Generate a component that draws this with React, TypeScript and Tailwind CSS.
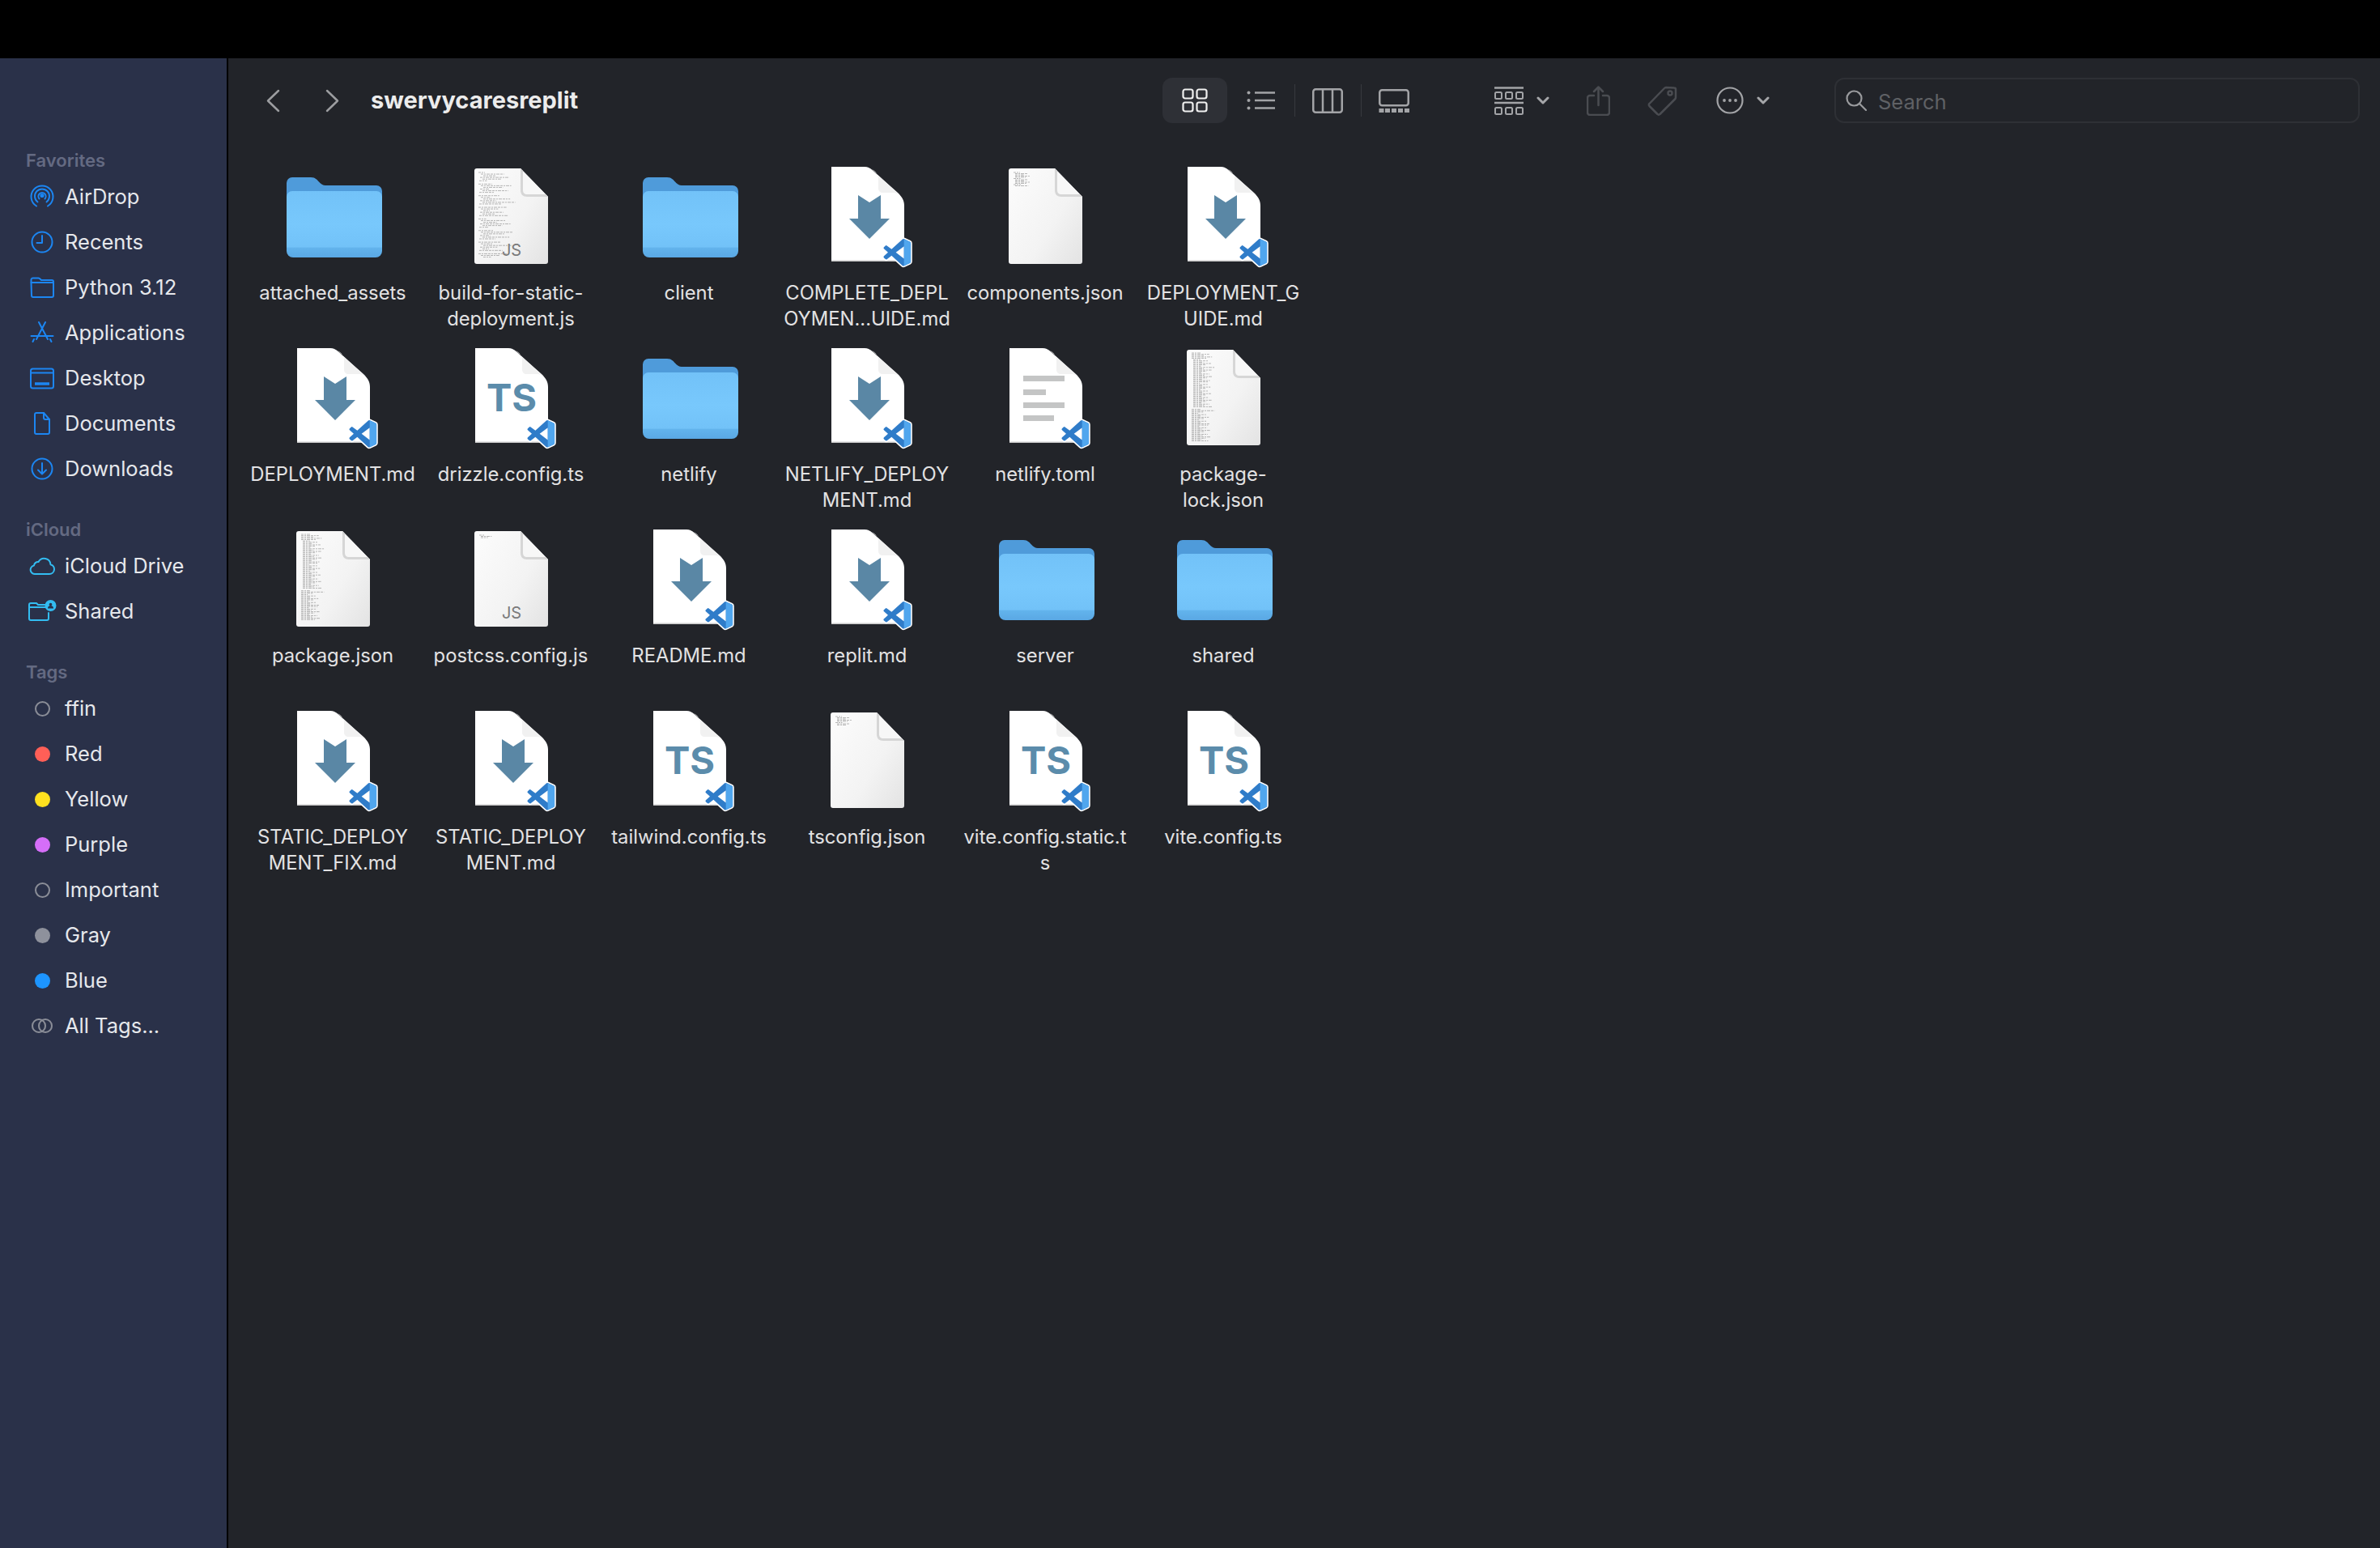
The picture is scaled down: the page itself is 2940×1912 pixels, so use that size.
import type { ReactNode } from "react";

type Kind = "folder" | "md" | "ts" | "toml" | "code";

type FileItem = {
  lines: string[];
  kind: Kind;
  density?: "page" | "few" | "tiny" | "long" | "long2" | "small";
  js?: boolean;
};

const FILES: FileItem[] = [
  { lines: ["attached_assets"], kind: "folder" },
  { lines: ["build-for-static-", "deployment.js"], kind: "code", density: "page", js: true },
  { lines: ["client"], kind: "folder" },
  { lines: ["COMPLETE_DEPL", "OYMEN...UIDE.md"], kind: "md" },
  { lines: ["components.json"], kind: "code", density: "few" },
  { lines: ["DEPLOYMENT_G", "UIDE.md"], kind: "md" },
  { lines: ["DEPLOYMENT.md"], kind: "md" },
  { lines: ["drizzle.config.ts"], kind: "ts" },
  { lines: ["netlify"], kind: "folder" },
  { lines: ["NETLIFY_DEPLOY", "MENT.md"], kind: "md" },
  { lines: ["netlify.toml"], kind: "toml" },
  { lines: ["package-", "lock.json"], kind: "code", density: "long" },
  { lines: ["package.json"], kind: "code", density: "long2" },
  { lines: ["postcss.config.js"], kind: "code", density: "tiny", js: true },
  { lines: ["README.md"], kind: "md" },
  { lines: ["replit.md"], kind: "md" },
  { lines: ["server"], kind: "folder" },
  { lines: ["shared"], kind: "folder" },
  { lines: ["STATIC_DEPLOY", "MENT_FIX.md"], kind: "md" },
  { lines: ["STATIC_DEPLOY", "MENT.md"], kind: "md" },
  { lines: ["tailwind.config.ts"], kind: "ts" },
  { lines: ["tsconfig.json"], kind: "code", density: "small" },
  { lines: ["vite.config.static.t", "s"], kind: "ts" },
  { lines: ["vite.config.ts"], kind: "ts" },
];

const BLUE = "#1c86f2";
const CYAN = "#33bdf2";

function Ico({ children, w = 32, h = 32, stroke = BLUE }: { children: ReactNode; w?: number; h?: number; stroke?: string }) {
  return (
    <svg width={w} height={h} viewBox={`0 0 ${w} ${h}`} fill="none" stroke={stroke} strokeWidth="2" strokeLinecap="round" strokeLinejoin="round">
      {children}
    </svg>
  );
}

const AirDropIcon = () => (
  <Ico>
    <path d="M9 27.500A13.500 13.500 0 1 1 23 27.500" />
    <path d="M10.500 22.500A9 9 0 1 1 21.500 22.500" />
    <path d="M12.500 18.500A4.600 4.600 0 1 1 19.500 18.500" />
    <circle cx="16" cy="14.500" r="1.600" fill={BLUE} />
  </Ico>
);
const RecentsIcon = () => (
  <Ico>
    <circle cx="16" cy="16" r="12.500" />
    <path d="M16 8v9H9.500" />
  </Ico>
);
const FolderIcon = () => (
  <Ico>
    <path d="M2.500 10V6.500a2 2 0 0 1 2-2h7a3 3 0 0 1 2 1l1.500 1.500h13a2 2 0 0 1 2 2V26a2 2 0 0 1-2 2h-23a2 2 0 0 1-2-2z" />
    <path d="M2.500 10h27" />
  </Ico>
);
const AppsIcon = () => (
  <Ico>
    <path d="M12 3l11 21" />
    <path d="M20 3L9 24" />
    <path d="M2.500 20h27" />
    <path d="M6 24l-1.500 3M26 24l1.500 3" />
  </Ico>
);
const DesktopIcon = () => (
  <Ico>
    <rect x="2" y="4.500" width="28" height="24" rx="2.500" />
    <path d="M2 9.500h28" />
    <path d="M7 23h18" strokeWidth="3.500" strokeLinecap="butt" />
  </Ico>
);
const DocIcon = () => (
  <Ico>
    <path d="M7 5a2 2 0 0 1 2-2h9l7 8v16a2 2 0 0 1-2 2H9a2 2 0 0 1-2-2z" />
    <path d="M18 3v6a2 2 0 0 0 2 2h5" />
  </Ico>
);
const DownloadsIcon = () => (
  <Ico>
    <circle cx="16" cy="16" r="12.500" />
    <path d="M16 9v13M11 17.500l5 5 5-5" />
  </Ico>
);
const CloudIcon = () => (
  <Ico stroke={CYAN}>
    <path d="M8 26h17a6 6 0 0 0 1.500-11.800A8 8 0 0 0 11.500 11 5 5 0 0 0 6 15.500 5.300 5.300 0 0 0 8 26z" />
  </Ico>
);
const SharedIcon = () => (
  <Ico w={36} stroke={CYAN}>
    <path d="M2 10V8a2 2 0 0 1 2-2h7l2 2h10M2 11h20M2 10v15a2 2 0 0 0 2 2h20a2 2 0 0 0 2-2v-7" />
    <circle cx="28.500" cy="9" r="6" fill={CYAN} />
    <circle cx="28.500" cy="7.500" r="1.800" fill="#2a3149" stroke="none" />
    <path d="M25 12.500a3.500 3.500 0 0 1 7 0z" fill="#2a3149" stroke="none" />
  </Ico>
);

const Dot = ({ color }: { color: string }) => <span className="h-[19px] w-[19px] rounded-full" style={{ backgroundColor: color }} />;
const Ring = () => <span className="h-[19px] w-[19px] rounded-full border-[2px] border-[#8a8d97]" />;
const AllTags = () => (
  <svg width="28" height="20" viewBox="0 0 28 20" fill="none" stroke="#8a8d97" strokeWidth="2">
    <circle cx="18" cy="10" r="8" />
    <circle cx="10" cy="10" r="8" />
  </svg>
);

function SideRow({ icon, label }: { icon: ReactNode; label: string }) {
  return (
    <div className="flex h-14 items-center pl-8">
      <span className="flex w-10 items-center justify-center">{icon}</span>
      <span className="ml-2 text-[25.500px] leading-none text-[#e6e8ec]">{label}</span>
    </div>
  );
}

function SideHead({ children }: { children: ReactNode }) {
  return <div className="flex h-[34px] items-center pl-8 text-[22px] font-semibold text-[#646a82]">{children}</div>;
}

function Sidebar() {
  return (
    <aside className="w-[282px] shrink-0 border-r-[2px] border-black bg-[#2a3149] pt-[109px]">
      <SideHead>Favorites</SideHead>
      <SideRow icon={<AirDropIcon />} label="AirDrop" />
      <SideRow icon={<RecentsIcon />} label="Recents" />
      <SideRow icon={<FolderIcon />} label="Python 3.12" />
      <SideRow icon={<AppsIcon />} label="Applications" />
      <SideRow icon={<DesktopIcon />} label="Desktop" />
      <SideRow icon={<DocIcon />} label="Documents" />
      <SideRow icon={<DownloadsIcon />} label="Downloads" />
      <div className="mt-[30px]">
        <SideHead>iCloud</SideHead>
        <SideRow icon={<CloudIcon />} label="iCloud Drive" />
        <SideRow icon={<SharedIcon />} label="Shared" />
      </div>
      <div className="mt-[30px]">
        <SideHead>Tags</SideHead>
        <SideRow icon={<Ring />} label="ffin" />
        <SideRow icon={<Dot color="#ff5f57" />} label="Red" />
        <SideRow icon={<Dot color="#ffe11f" />} label="Yellow" />
        <SideRow icon={<Dot color="#d56ef8" />} label="Purple" />
        <SideRow icon={<Ring />} label="Important" />
        <SideRow icon={<Dot color="#8e919c" />} label="Gray" />
        <SideRow icon={<Dot color="#1d95ff" />} label="Blue" />
        <SideRow icon={<AllTags />} label="All Tags..." />
      </div>
    </aside>
  );
}

function MiniChevron() {
  return (
    <svg width="16" height="10" viewBox="0 0 16 10" fill="none" stroke="#a5a6a9" strokeWidth="3" strokeLinecap="round" strokeLinejoin="round" className="ml-4">
      <path d="M2 2l6 6 6-6" />
    </svg>
  );
}

function Toolbar() {
  const bright = "#f0f0f0";
  const mid = "#a3a4a7";
  const dim = "#4a4c51";
  return (
    <div className="flex h-[104px] items-center">
      <div className="flex w-[1154px] shrink-0 items-center">
        <svg width="17" height="29" viewBox="0 0 17 29" fill="none" stroke="#9c9da0" strokeWidth="2.500" strokeLinecap="round" strokeLinejoin="round" className="ml-[47px]">
          <path d="M15 2L2 14.500 15 27" />
        </svg>
        <svg width="17" height="29" viewBox="0 0 17 29" fill="none" stroke="#9c9da0" strokeWidth="2.500" strokeLinecap="round" strokeLinejoin="round" className="ml-14">
          <path d="M2 2l13 12.500L2 27" />
        </svg>
        <span className="mb-0.5 ml-[39px] text-[29px] leading-none font-bold text-[#ececec]">swervycaresreplit</span>
      </div>

      <div className="flex h-14 w-20 items-center justify-center rounded-xl bg-[#2e3036]">
        <svg width="32" height="30" viewBox="0 0 32 30" fill="none" stroke={bright} strokeWidth="2.200">
          <rect x="1.500" y="1.500" width="12" height="11" rx="2.500" />
          <rect x="18.500" y="1.500" width="12" height="11" rx="2.500" />
          <rect x="1.500" y="17.500" width="12" height="11" rx="2.500" />
          <rect x="18.500" y="17.500" width="12" height="11" rx="2.500" />
        </svg>
      </div>
      <svg width="35" height="24" viewBox="0 0 35 24" fill="none" stroke={mid} strokeWidth="2.500" className="ml-6">
        <path d="M10 2.500h25M10 12h25M10 21.500h25" />
        <circle cx="2.500" cy="2.500" r="2" fill={mid} stroke="none" />
        <circle cx="2.500" cy="12" r="2" fill={mid} stroke="none" />
        <circle cx="2.500" cy="21.500" r="2" fill={mid} stroke="none" />
      </svg>
      <span className="ml-6 h-10 w-px bg-[#37393e]" />
      <svg width="38" height="31" viewBox="0 0 38 31" fill="none" stroke={mid} strokeWidth="2.500" className="ml-[21px]">
        <rect x="1.250" y="1.250" width="35.500" height="28.500" rx="3" />
        <path d="M13 1v29M25 1v29" />
      </svg>
      <span className="ml-[22px] h-10 w-px bg-[#37393e]" />
      <svg width="38" height="29" viewBox="0 0 38 29" fill="none" stroke={mid} strokeWidth="2.500" className="ml-[21px]">
        <rect x="1.250" y="1.250" width="35.500" height="19" rx="3" />
        <g fill={mid} stroke="none">
          <rect x="0.500" y="24" width="6" height="5" />
          <rect x="8" y="24" width="6" height="5" />
          <rect x="16" y="24" width="6" height="5" />
          <rect x="24" y="24" width="6" height="5" />
          <rect x="32" y="24" width="6" height="5" />
        </g>
      </svg>
      <svg width="36" height="35" viewBox="0 0 36 35" fill="none" stroke={mid} strokeWidth="2" className="ml-[105px]">
        <path d="M0 1.500h36M0 20h36" strokeWidth="2.500" />
        <rect x="1" y="7" width="8" height="8" rx="1.500" />
        <rect x="14" y="7" width="8" height="8" rx="1.500" />
        <rect x="27" y="7" width="8" height="8" rx="1.500" />
        <rect x="1" y="26" width="8" height="8" rx="1.500" />
        <rect x="14" y="26" width="8" height="8" rx="1.500" />
        <rect x="27" y="26" width="8" height="8" rx="1.500" />
      </svg>
      <MiniChevron />
      <svg width="29" height="37" viewBox="0 0 29 37" fill="none" stroke={dim} strokeWidth="2.500" strokeLinecap="round" strokeLinejoin="round" className="ml-[46px]">
        <path d="M9 12H4a3 3 0 0 0-3 3v18a3 3 0 0 0 3 3h21a3 3 0 0 0 3-3V15a3 3 0 0 0-3-3h-5" />
        <path d="M14.500 24V2M9 7l5.500-5.500L20 7" />
      </svg>
      <svg width="37" height="37" viewBox="0 0 37 37" fill="none" stroke={dim} strokeWidth="2.500" strokeLinejoin="round" className="ml-[46px]">
        <path d="M2.500 22L21 3a3 3 0 0 1 2-1l10 .5a2 2 0 0 1 2 2L35 14a3 3 0 0 1-1 2.500L15.500 35a2 2 0 0 1-3 0l-10-10a2 2 0 0 1 0-3z" />
        <circle cx="28" cy="9" r="2.500" />
      </svg>
      <svg width="34" height="34" viewBox="0 0 34 34" fill="none" stroke={mid} strokeWidth="2.200" className="ml-12">
        <circle cx="17" cy="17" r="15.500" />
        <circle cx="10" cy="17" r="1.900" fill={mid} stroke="none" />
        <circle cx="17" cy="17" r="1.900" fill={mid} stroke="none" />
        <circle cx="24" cy="17" r="1.900" fill={mid} stroke="none" />
      </svg>
      <MiniChevron />

      <div className="ml-20 flex h-14 w-[649px] items-center rounded-xl border-2 border-[#2e3035] pl-3">
        <svg width="26" height="26" viewBox="0 0 26 26" fill="none" stroke="#9a9b9e" strokeWidth="2.200" strokeLinecap="round">
          <circle cx="10.500" cy="10.500" r="9" />
          <path d="M17 17l8 8" />
        </svg>
        <span className="ml-[14px] mt-1 text-[25.500px] leading-none text-[#5f6165]">Search</span>
      </div>
    </div>
  );
}

function FolderArt() {
  return (
    <svg width="128" height="128" viewBox="0 0 128 128" className="overflow-visible">
      <defs>
        <linearGradient id="ffront" x1="0" y1="0" x2="0" y2="1">
          <stop offset="0" stopColor="#72c2f8" />
          <stop offset="0.5" stopColor="#78c8fc" />
          <stop offset="0.84" stopColor="#72c2f8" />
          <stop offset="0.86" stopColor="#62b3ec" />
          <stop offset="1" stopColor="#5aa8e4" />
        </linearGradient>
      </defs>
      <path d="M7 26a7 7 0 0 1 7-7h23c3 0 5 .8 7 2.500 3 2.500 5 7 11 7.500h63a7 7 0 0 1 7 7v20H7z" fill="#4f9bda" />
      <path d="M7 43a7 7 0 0 1 7-7h104a7 7 0 0 1 7 7v67a8 8 0 0 1-8 8H15a8 8 0 0 1-8-8z" fill="url(#ffront)" />
    </svg>
  );
}

function VsBadge() {
  return (
    <g transform="translate(84.500 95) scale(1.400)">
      <path
        d="M23.150 2.587L18.210.21a1.494 1.494 0 0 0-1.705.29l-9.460 8.630-4.120-3.128a.999.999 0 0 0-1.276.057L.327 7.261A1 1 0 0 0 .326 8.740L3.899 12 .326 15.260a1 1 0 0 0 .001 1.479L1.650 17.940a.999.999 0 0 0 1.276.057l4.120-3.128 9.460 8.630a1.492 1.492 0 0 0 1.704.290l4.942-2.377A1.500 1.500 0 0 0 24 20.060V3.939a1.500 1.500 0 0 0-.850-1.352z"
        fill="#fff"
        stroke="#fff"
        strokeWidth="2.400"
        strokeLinejoin="round"
      />
      <path
        d="M23.150 2.587L18.210.21a1.494 1.494 0 0 0-1.705.29l-9.460 8.630-4.120-3.128a.999.999 0 0 0-1.276.057L.327 7.261A1 1 0 0 0 .326 8.740L3.899 12 .326 15.260a1 1 0 0 0 .001 1.479L1.650 17.940a.999.999 0 0 0 1.276.057l4.120-3.128 9.460 8.630a1.492 1.492 0 0 0 1.704.290l4.942-2.377A1.500 1.500 0 0 0 24 20.060V3.939a1.500 1.500 0 0 0-.850-1.352zm-5.146 14.861L10.826 12l7.178-5.448v10.896z"
        fill="#2f7cc9"
        fillRule="evenodd"
      />
      <path d="M18.004.1l5.146 2.487A1.500 1.500 0 0 1 24 3.939V20.060a1.500 1.500 0 0 1-.850 1.352L18.004 23.900V.1z" fill="#50a6ee" />
    </g>
  );
}

function VsDoc({ children }: { children: ReactNode }) {
  return (
    <svg width="128" height="128" viewBox="0 0 128 128" className="overflow-visible">
      <path d="M20 6h41c4 0 7 1.500 10 4.500L102 38c5 5 8 9 8 16v69H20z" fill="#fff" />
      <path d="M20 121.500h90v1.500H20z" fill="#c9c9c9" />
      <path d="M64 6.500c3 .5 5.500 2 7.500 4L104 41c-3-2.500-6-3-9-3H84c-4 0-6-2-6-6V20c0-5-5-11-14-13.500z" fill="#f1f1f1" />
      {children}
      <VsBadge />
    </svg>
  );
}

// made up rows of tiny code, the same on every render
function CodeRows({ density }: { density: NonNullable<FileItem["density"]> }) {
  const rows: { x: number; y: number; w: number }[] = [];
  const wave = (i: number) => ((i * 37) % 23) / 23;
  if (density === "few" || density === "tiny" || density === "small") {
    const n = density === "few" ? 12 : density === "small" ? 8 : 3;
    for (let i = 0; i < n; i++) rows.push({ x: 25 + (i % 5 === 0 ? 0 : 2), y: 13 + i * 1.500, w: (density === "tiny" ? 6 : 8) + wave(i) * 12 });
  } else if (density === "page") {
    for (let i = 0; i < 52; i++) {
      if (i % 7 === 6) continue;
      rows.push({ x: 24 + ((i * 3) % 7), y: 13 + i * 2.050, w: 8 + wave(i) * 34 });
    }
  } else {
    const n = density === "long" ? 68 : 66;
    for (let i = 0; i < n; i++) {
      if (i === 42) continue;
      const top = i < 5;
      rows.push({ x: i < 42 && !top ? 27 : 25, y: 12 + i * 1.620, w: (top ? 12 : 8) + wave(i) * (i % 11 === 0 ? 26 : 16) });
    }
  }
  return (
    <g stroke="#6f6f6f" strokeWidth="0.800" strokeDasharray="3 1 2 1 4 1" opacity="0.6">
      {rows.map((r, i) => (
        <path key={i} d={`M${r.x} ${r.y}h${r.w}`} />
      ))}
    </g>
  );
}

function CodeDoc({ density, js }: { density: NonNullable<FileItem["density"]>; js?: boolean }) {
  const gid = `pg-${density}`;
  return (
    <svg width="128" height="128" viewBox="0 0 128 128" className="overflow-visible">
      <defs>
        <linearGradient id={gid} x1="0" y1="0.2" x2="1" y2="1">
          <stop offset="0" stopColor="#fbfbfb" />
          <stop offset="0.55" stopColor="#f3f3f3" />
          <stop offset="1" stopColor="#e3e3e3" />
        </linearGradient>
      </defs>
      <path d="M22 8h54l34 35v80a3 3 0 0 1-3 3H22a3 3 0 0 1-3-3V11a3 3 0 0 1 3-3z" fill={`url(#${gid})`} />
      <CodeRows density={density} />
      <path d="M76 8l34 35H84c-5 0-8-3-8-8z" fill="#f7f7f7" />
      <path d="M76 35c0 5 3 8 8 8h26l-3-3H84c-3 0-5-2-5-5V11l-3-3z" fill="#c8c8c8" opacity="0.7" />
      {js && (
        <text x="65" y="116" textAnchor="middle" fontSize="20" fill="#7a7a7a" fontFamily="Inter, sans-serif">
          JS
        </text>
      )}
    </svg>
  );
}

function FileIcon({ item }: { item: FileItem }) {
  if (item.kind === "folder") return <FolderArt />;
  if (item.kind === "code") return <CodeDoc density={item.density ?? "few"} js={item.js} />;
  if (item.kind === "md") {
    return (
      <VsDoc>
        <path d="M53 41l14 9 14-9v29h11L67 95 42 70h11z" fill="#5a87a5" />
      </VsDoc>
    );
  }
  if (item.kind === "ts") {
    return (
      <VsDoc>
        <text x="65" y="84" textAnchor="middle" fontSize="47" fontWeight="700" fill="#5b8cab" fontFamily="Inter, sans-serif">
          TS
        </text>
      </VsDoc>
    );
  }
  return (
    <VsDoc>
      <g fill="#c4c5c5">
        <rect x="37" y="40" width="51" height="7" />
        <rect x="37" y="57" width="28" height="7" />
        <rect x="37" y="73" width="51" height="7" />
        <rect x="37" y="89" width="38" height="7" />
      </g>
    </VsDoc>
  );
}

function FileCell({ item }: { item: FileItem }) {
  return (
    <div className="flex flex-col items-center">
      <FileIcon item={item} />
      <div className="mt-[18px] text-center text-[23.800px] leading-8 whitespace-nowrap text-[#e2e2e3]">
        {item.lines.map((l) => (
          <div key={l}>{l}</div>
        ))}
      </div>
    </div>
  );
}

export default function App() {
  return (
    <div className="flex min-h-screen flex-col bg-black [font-family:Inter,'Noto_Sans',sans-serif]">
      <div className="h-[72px] shrink-0 bg-black" />
      <div className="flex flex-1">
        <Sidebar />
        <main className="min-w-0 flex-1 bg-[#222429]">
          <Toolbar />
          <div className="mt-6 ml-[19px] grid grid-cols-[repeat(6,220px)] auto-rows-[224px]">
            {FILES.map((f) => (
              <FileCell key={f.lines.join("")} item={f} />
            ))}
          </div>
        </main>
      </div>
    </div>
  );
}
